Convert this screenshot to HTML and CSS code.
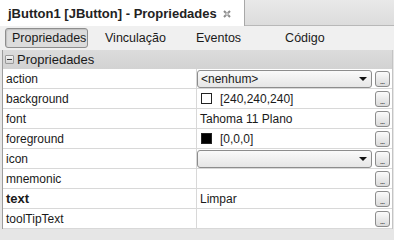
FILE: index.html
```html
<!DOCTYPE html>
<html>
<head>
<meta charset="utf-8">
<link rel="stylesheet" href="styles.css">
</head>
<body>
<div class="window">
  <div class="titlebar">
    <div class="tab">
      <span class="tab-title">jButton1 [JButton] - Propriedades</span>
      <svg class="close" width="8" height="8" viewBox="0 0 8 8"><path d="M1 1 L7 7 M7 1 L1 7" stroke="#8a8a8a" stroke-width="2"/><rect x="2.5" y="2.5" width="3" height="3" fill="#c8c8c8"/></svg>
    </div>
  </div>
  <div class="toolbar">
    <span class="tbtn active">Propriedades</span>
    <span class="tbtn t2">Vinculação</span>
    <span class="tbtn t3">Eventos</span>
    <span class="tbtn t4">Código</span>
  </div>
  <div class="panel">
    <div class="section">
      <span class="minus"></span>
      <span>Propriedades</span>
    </div>
    <div class="row">
      <div class="name">action</div>
      <div class="value"><div class="combo"><span>&lt;nenhum&gt;</span><span class="arrow"></span></div></div>
      <div class="more"><span class="dots">...</span></div>
    </div>
    <div class="row">
      <div class="name">background</div>
      <div class="value"><span class="swatch"></span><span>[240,240,240]</span></div>
      <div class="more"><span class="dots">...</span></div>
    </div>
    <div class="row">
      <div class="name">font</div>
      <div class="value"><span>Tahoma 11 Plano</span></div>
      <div class="more"><span class="dots">...</span></div>
    </div>
    <div class="row">
      <div class="name">foreground</div>
      <div class="value"><span class="swatch black"></span><span>[0,0,0]</span></div>
      <div class="more"><span class="dots">...</span></div>
    </div>
    <div class="row">
      <div class="name">icon</div>
      <div class="value"><div class="combo"><span></span><span class="arrow"></span></div></div>
      <div class="more"><span class="dots">...</span></div>
    </div>
    <div class="row">
      <div class="name">mnemonic</div>
      <div class="value"></div>
      <div class="more"><span class="dots">...</span></div>
    </div>
    <div class="row">
      <div class="name bold">text</div>
      <div class="value"><span>Limpar</span></div>
      <div class="more"><span class="dots">...</span></div>
    </div>
    <div class="row">
      <div class="name">toolTipText</div>
      <div class="value"></div>
      <div class="more"><span class="dots">...</span></div>
    </div>
  </div>
</div>
</body>
</html>
```
FILE: styles.css
```css
html, body {
  margin: 0;
  padding: 0;
}
body {
  width: 394px;
  height: 232px;
  overflow: hidden;
  background: #e6e6e6;
  font-family: "Liberation Sans", Arial, sans-serif;
  font-size: 12px;
  color: #1a1a1a;
}
.window {
  display: flex;
  flex-direction: column;
  height: 232px;
}
.titlebar {
  height: 26px;
  flex: none;
  display: flex;
  background: linear-gradient(#e9e9e9, #dcdcdc);
  border-bottom: 1px solid #b8b8b8;
  box-sizing: border-box;
}
.tab {
  width: 245px;
  background: #ffffff;
  border-right: 1px solid #a8a8a8;
  display: flex;
  align-items: center;
  padding-left: 8px;
  box-sizing: border-box;
  gap: 6px;
  margin-bottom: -1px;
}
.tab-title {
  font-weight: bold;
  font-size: 13px;
  color: #222;
}
.close {
  margin-top: 1px;
}
.toolbar {
  height: 24px;
  flex: none;
  display: flex;
  align-items: center;
  background: #f0f0f0;
  padding-left: 5px;
  box-sizing: border-box;
  font-size: 12.5px;
}
.tbtn {
  padding: 2px 6px;
  border: 1px solid transparent;
}
.tbtn.active {
  width: 83px;
  box-sizing: border-box;
  background: #dcdcdc;
  border: 1px solid #8e8e8e;
  border-radius: 3px;
  box-shadow: inset 1px 1px 1px #c0c0c0;
}
.t2 { margin-left: 10px; }
.t3 { margin-left: 16px; }
.t4 { margin-left: 30px; }
.panel {
  flex: 1;
  margin-left: 2px;
  margin-right: 1px;
  margin-bottom: 4px;
  border-left: 1px solid #9c9c9c;
  border-right: 1px solid #c4c4c4;
  background: #ffffff;
  display: flex;
  flex-direction: column;
}
.section {
  height: 19px;
  flex: none;
  display: flex;
  align-items: center;
  gap: 3px;
  background: linear-gradient(#dcdcdc, #d2d2d2);
  padding-left: 2px;
  font-size: 13px;
  box-sizing: border-box;
}
.minus {
  width: 9px;
  height: 9px;
  box-sizing: border-box;
  border: 1px solid #9a9a9a;
  background: linear-gradient(#f4f4f4, #d4d4d4);
  position: relative;
  border-radius: 1px;
}
.minus::after {
  content: "";
  position: absolute;
  left: 1px;
  right: 1px;
  top: 3px;
  height: 1px;
  background: #333;
}
.row {
  height: 20px;
  flex: none;
  display: grid;
  grid-template-columns: 194px 1fr 20px;
  border-bottom: 1px solid #d8d8d8;
  box-sizing: border-box;
}
.name {
  padding-left: 3px;
  display: flex;
  align-items: center;
  border-right: 1px solid #d8d8d8;
}
.name.bold {
  font-weight: bold;
  font-size: 13px;
}
.value {
  display: flex;
  align-items: center;
  gap: 8px;
  padding-left: 3px;
  min-width: 0;
}
.combo {
  flex: 1;
  height: 18px;
  margin-left: -3px;
  box-sizing: border-box;
  border: 1px solid #8d8d8d;
  border-radius: 3px;
  background: linear-gradient(#fafafa, #e6e6e6);
  display: flex;
  align-items: center;
  justify-content: space-between;
  padding: 0 4px 0 3px;
}
.arrow {
  width: 0;
  height: 0;
  border-left: 4px solid transparent;
  border-right: 4px solid transparent;
  border-top: 4px solid #111;
  margin-top: 1px;
}
.swatch {
  width: 11px;
  height: 11px;
  box-sizing: border-box;
  border: 1px solid #222;
  background: #fff;
  margin-left: 1px;
}
.swatch.black {
  background: #000;
}
.more {
  display: flex;
  align-items: center;
  justify-content: center;
}
.dots {
  width: 15px;
  height: 16px;
  box-sizing: border-box;
  border: 1px solid #8c8c8c;
  border-radius: 3px;
  background: linear-gradient(#fbfbfb, #dadada);
  font-size: 9px;
  line-height: 18px;
  text-align: center;
  color: #444;
  letter-spacing: -1px;
}
```
